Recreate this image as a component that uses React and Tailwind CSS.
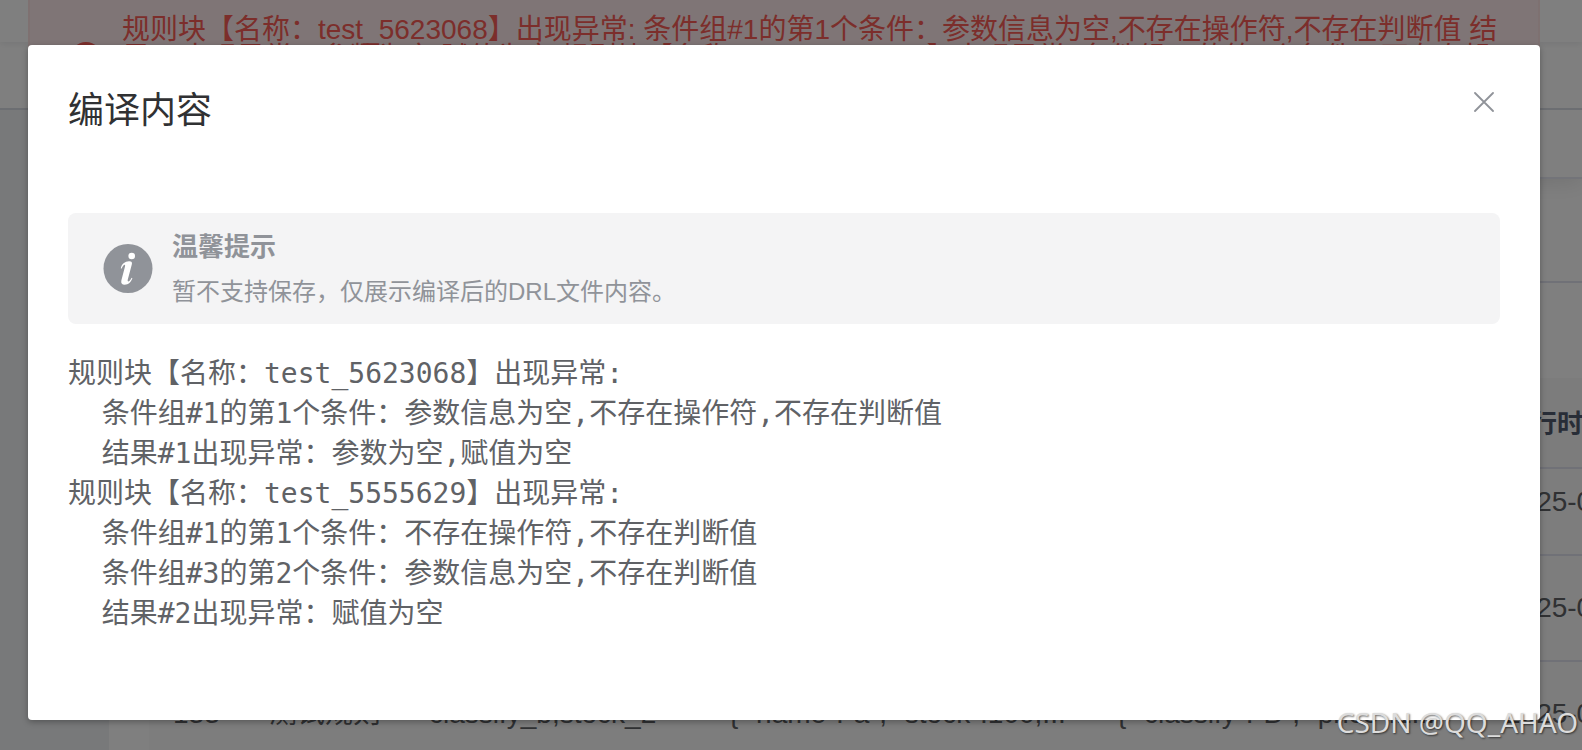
import React from 'react';

const errorText =
  '规则块【名称：test_5623068】出现异常: 条件组#1的第1个条件：参数信息为空,不存在操作符,不存在判断值 结果#1出现异常：参数为空,赋值为空 规则块【名称：test_5555629】出现异常: 条件组#1的第1个条件：不存在操作符,不存在判断值 条件组#3的第2个条件：参数信息为空,不存在判断值 结果#2出现异常：赋值为空';

const compiled = `规则块【名称：test_5623068】出现异常:
  条件组#1的第1个条件：参数信息为空,不存在操作符,不存在判断值
  结果#1出现异常：参数为空,赋值为空
规则块【名称：test_5555629】出现异常:
  条件组#1的第1个条件：不存在操作符,不存在判断值
  条件组#3的第2个条件：参数信息为空,不存在判断值
  结果#2出现异常：赋值为空`;

const rows = [
  { time: '2025-0' },
  { time: '2025-0' },
  {
    id: '133',
    name: '测试规则',
    params: 'classify_b,stock_2',
    input: '{ "name":"a", "stock":100,...',
    output: '{ "classify":"B", "price":1...',
    time: '2025-0',
  },
];

const Columns = () => (
  <colgroup>
    <col className="w-[96px]" />
    <col className="w-[160px]" />
    <col className="w-[300px]" />
    <col className="w-[388px]" />
    <col className="w-[388px]" />
    <col className="w-[300px]" />
  </colgroup>
);

const RuleTable = () => (
  <div className="w-[1656px] bg-[#fafafa] pl-6">
    <table className="w-full table-fixed text-left text-[26px] text-[#515a6e] bg-[#f8f8f9]">
      <Columns />
      <thead>
        <tr className="h-[90px] border-b-2 border-[#e0e2ee]">
          <th></th>
          <th></th>
          <th></th>
          <th></th>
          <th></th>
          <th className="pt-1">运行时间</th>
        </tr>
      </thead>
    </table>
    {/* Body is scrolled slightly under the header */}
    <div className="overflow-hidden">
      <table className="w-full table-fixed -mt-5 text-[#606266]">
        <Columns />
        <tbody>
          {rows.map((row, i) => (
            <tr key={i} className="h-[106px] border-b-2 border-[#e0e2ee] whitespace-nowrap">
              <td>{row.id}</td>
              <td>{row.name}</td>
              <td>{row.params}</td>
              <td>{row.input}</td>
              <td>{row.output}</td>
              <td>{row.time}</td>
            </tr>
          ))}
        </tbody>
      </table>
    </div>
  </div>
);

const BackgroundPage = () => (
  <div className="h-full flex flex-col bg-white">
    <div className="h-[42px] shrink-0 shadow-[0_2px_6px_rgba(0,21,41,0.08)]"></div>
    <div className="h-[68px] shrink-0 border-b-2 border-[#d8dce5]"></div>
    <div className="flex-1 min-h-0 flex">
      <aside className="w-[109px] shrink-0 bg-[#f0f2f5]"></aside>
      <main className="flex-1 min-w-0 overflow-hidden">
        <div className="h-[69px] border-b-2 border-[#e6e8f2] shadow-[0_2px_24px_rgba(0,0,0,0.12)]"></div>
        <div className="h-[104px] border-b-2 border-[#e0e2ee]"></div>
        <div className="h-[95px]"></div>
        <div className="pl-10">
          <RuleTable />
        </div>
      </main>
    </div>
  </div>
);

const ErrorMessage = () => (
  <div
    role="alert"
    className="absolute left-7 right-[42px] top-0 flex items-center gap-5 px-10 pt-4 pb-5 border-2 border-t-0 border-[#fde2e2] bg-[#feebec] rounded-b-lg text-[#f85c56]"
  >
    <svg viewBox="0 0 32 32" className="size-8 shrink-0" aria-hidden="true">
      <circle cx="16" cy="16" r="16" fill="currentColor" />
      <path d="M11 11l10 10M21 11L11 21" stroke="#feebec" strokeWidth="3" />
    </svg>
    <p className="leading-7">{errorText}</p>
  </div>
);

const InfoIcon = () => (
  <svg viewBox="0 0 50 50" className="size-[50px]" aria-hidden="true">
    <circle cx="25" cy="24.5" r="24.5" fill="#909399" />
    <circle cx="28.7" cy="12" r="3.3" fill="#fff" />
    <path
      d="M17.8 24.4C18.4 20 22 17.4 26 17.2C28.6 17.1 29.4 18.2 28.8 20.6L24.8 35.6C24.3 37.6 25.4 37.9 26.6 36.8C27.5 36 28.2 34.9 28.6 33.8L29.4 34.2C28.2 37.9 25.2 40.7 21.8 40.7C18.8 40.7 17.7 39 18.4 36.2L22 22.6C22.5 20.6 21.6 20.2 20.4 21.4C19.6 22.2 19 23.4 18.7 24.6Z"
      fill="#fff"
    />
  </svg>
);

const CompileDialog = () => (
  <div
    role="dialog"
    aria-labelledby="dialog-title"
    className="relative w-full bg-white rounded px-10 pt-[42px] pb-[86px] shadow-[0_2px_6px_rgba(0,0,0,0.3)]"
  >
    <div className="flex items-start justify-between">
      <h2 id="dialog-title" className="text-4xl leading-[48px] text-[#303133]">
        编译内容
      </h2>
      <button type="button" aria-label="关闭" className="w-8 h-[30px] flex items-center justify-center text-[#909399] cursor-pointer">
        <svg viewBox="0 0 20 20" className="size-5" fill="none" stroke="currentColor" strokeWidth="1.8" strokeLinecap="round">
          <path d="M1 1l18 18M19 1L1 19" />
        </svg>
      </button>
    </div>

    <div className="mt-[78px] flex items-center gap-4 rounded-lg bg-[#f4f4f5] px-8 py-4 text-[#909399]">
      <div className="w-14 flex justify-center">
        <InfoIcon />
      </div>
      <div>
        <h3 className="text-[26px] leading-9 font-bold">温馨提示</h3>
        <p className="mt-[10px] text-2xl leading-[33px]">暂不支持保存，仅展示编译后的DRL文件内容。</p>
      </div>
    </div>

    <pre className="mt-[30px] font-['DejaVu_Sans_Mono','Noto_Sans_CJK_SC',monospace] text-[28px] leading-10 text-[#606266] overflow-hidden">
      {compiled}
    </pre>
  </div>
);

const App = () => {
  return (
    <div className="relative h-screen overflow-hidden font-['Liberation_Sans','Noto_Sans_CJK_SC',sans-serif] text-[28px]">
      <BackgroundPage />
      <ErrorMessage />
      <div className="absolute inset-0 bg-black/50 pl-7 pr-[42px] pt-[45px]">
        <CompileDialog />
      </div>
      <span className="absolute right-1 bottom-2 leading-10 font-['Noto_Sans',sans-serif] text-[#dcdcdc] [text-shadow:1px_1px_2px_rgba(0,0,0,0.6)]">
        CSDN @QQ_AHAO
      </span>
    </div>
  );
};

export default App;
